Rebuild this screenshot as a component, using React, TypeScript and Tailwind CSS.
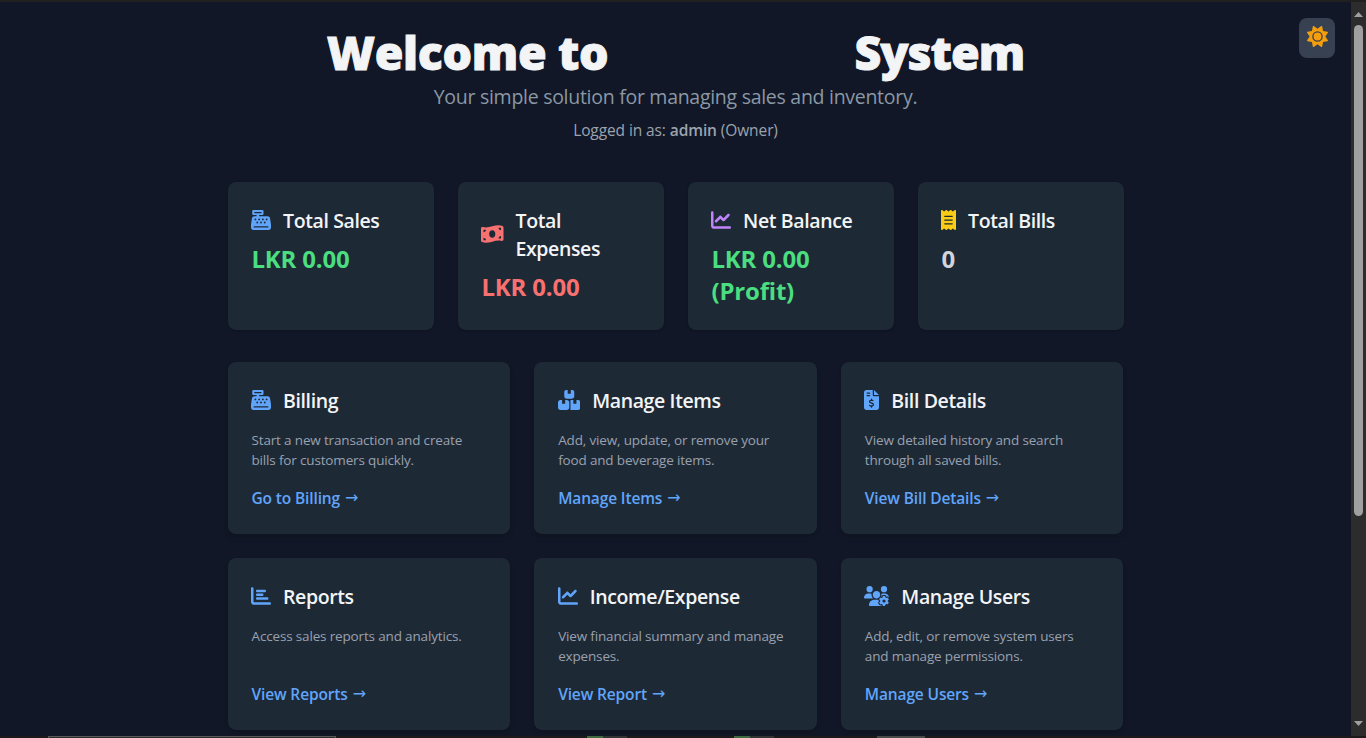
import type { ReactNode } from "react";
import {
  FaBoxesStacked,
  FaCashRegister,
  FaChartBar,
  FaChartLine,
  FaFileInvoiceDollar,
  FaMoneyBillWave,
  FaReceipt,
  FaSun,
  FaUsersGear,
} from "react-icons/fa6";

interface CardTitleProps {
  icon: ReactNode;
  children: ReactNode;
}

function CardTitle({ icon, children }: CardTitleProps) {
  return (
    <div className="flex items-center gap-3">
      <span className="-mt-px -ml-[0.5px] flex shrink-0">{icon}</span>
      <h2 className="pt-px text-[19.5px] leading-7 font-semibold tracking-[-0.38px] text-gray-100">{children}</h2>
    </div>
  );
}

interface StatCardProps {
  icon: ReactNode;
  title: string;
  value: string;
  valueClass: string;
}

function StatCard({ icon, title, value, valueClass }: StatCardProps) {
  return (
    <div className="h-[148px] rounded-lg bg-[#1e2936] p-6 shadow">
      <CardTitle icon={icon}>{title}</CardTitle>
      <p className={`mt-2 text-2xl font-bold tracking-[-0.2px] ${valueClass}`}>{value}</p>
    </div>
  );
}

interface ActionCardProps {
  icon: ReactNode;
  title: string;
  text: string;
  link: string;
}

function ActionCard({ icon, title, text, link }: ActionCardProps) {
  return (
    <div className="flex h-[172px] flex-col rounded-lg bg-[#1e2936] p-6 shadow-md">
      <CardTitle icon={icon}>{title}</CardTitle>
      <p className="mt-[15px] mb-4 grow text-[13.5px] leading-5 tracking-[-0.16px] text-gray-400">{text}</p>
      <a href="#" className="flex h-6 text-[15.5px] leading-6 font-semibold tracking-[-0.14px] text-[#60a5fa]">
        {link}
        <span className="ml-[5px] font-['DejaVu_Sans'] text-base leading-6 font-normal">→</span>
      </a>
    </div>
  );
}

function Scrollbar() {
  return (
    <div className="flex w-[15px] shrink-0 flex-col items-center bg-[#2c2c2c] pt-[10px] pb-[10px]">
      <svg width="9" height="5" viewBox="0 0 9 5" fill="#9f9f9f">
        <path d="M4.5 0 9 5H0Z" />
      </svg>
      <div className="mt-2 h-[491px] w-[9px] rounded-full bg-[#9f9f9f]" />
      <div className="grow" />
      <svg width="9" height="5" viewBox="0 0 9 5" fill="#9f9f9f">
        <path d="M4.5 5 9 0H0Z" />
      </svg>
    </div>
  );
}

export default function App() {
  return (
    <div className="flex h-[738px] w-[1366px] flex-col overflow-hidden bg-[#1f1f1f] font-['Open_Sans','Noto_Sans',sans-serif]">
      <div className="h-[2px] shrink-0 bg-[#202020]" />
      <div className="flex h-[734px] shrink-0">
        <main className="relative flex grow flex-col items-center overflow-hidden bg-[#111726]">
          <button
            aria-label="Toggle theme"
            className="absolute top-4 right-4 flex h-10 w-9 items-center justify-center rounded-lg bg-[#374151] pb-1 text-[#f59e0b]"
          >
            <FaSun className="size-[21px]" />
          </button>
          <div className="flex w-[896px] shrink-0 flex-col pt-[26px]">
            <header className="mb-10 flex flex-col items-center">
              <h1 className="flex items-baseline justify-center gap-[246px] text-[46.5px] leading-[48px] font-extrabold text-[#f3f4f6] [-webkit-text-stroke:0.9px_#f3f4f6]">
                <span className="tracking-[-0.35px]">Welcome to</span>
                <span className="tracking-[-1px]">System</span>
              </h1>
              <p className="mt-[7px] text-[19.5px] leading-7 tracking-[-0.28px] text-[#8b98a5]">
                Your simple solution for managing sales and inventory.
              </p>
              <p className="mt-[7px] text-[15.5px] leading-6 tracking-[-0.1px] text-[#9ca3af]">
                Logged in as: <span className="font-semibold">admin</span> (Owner)
              </p>
            </header>

            <section className="mb-8 grid grid-cols-4 gap-6">
              <StatCard
                icon={<FaCashRegister className="h-5 w-5 text-[#60a5fa]" />}
                title="Total Sales"
                value="LKR 0.00"
                valueClass="text-[#4ade80]"
              />
              <StatCard
                icon={<FaMoneyBillWave className="h-5 w-[22.5px] text-[#f87171]" />}
                title="Total Expenses"
                value="LKR 0.00"
                valueClass="text-[#f87171]"
              />
              <StatCard
                icon={<FaChartLine className="h-5 w-5 text-[#c084fc]" />}
                title="Net Balance"
                value="LKR 0.00 (Profit)"
                valueClass="text-[#4ade80]"
              />
              <StatCard
                icon={<FaReceipt className="h-5 w-[15px] text-[#facc15]" />}
                title="Total Bills"
                value="0"
                valueClass="text-[#d1d5db]"
              />
            </section>

            <section className="grid grid-cols-3 gap-6">
              <ActionCard
                icon={<FaCashRegister className="h-5 w-5 text-[#60a5fa]" />}
                title="Billing"
                text="Start a new transaction and create bills for customers quickly."
                link="Go to Billing"
              />
              <ActionCard
                icon={<FaBoxesStacked className="h-5 w-[22.5px] text-[#60a5fa]" />}
                title="Manage Items"
                text="Add, view, update, or remove your food and beverage items."
                link="Manage Items"
              />
              <ActionCard
                icon={<FaFileInvoiceDollar className="h-5 w-[15px] text-[#60a5fa]" />}
                title="Bill Details"
                text="View detailed history and search through all saved bills."
                link="View Bill Details"
              />
              <ActionCard
                icon={<FaChartBar className="h-5 w-5 text-[#60a5fa]" />}
                title="Reports"
                text="Access sales reports and analytics."
                link="View Reports"
              />
              <ActionCard
                icon={<FaChartLine className="h-5 w-5 text-[#60a5fa]" />}
                title="Income/Expense"
                text="View financial summary and manage expenses."
                link="View Report"
              />
              <ActionCard
                icon={<FaUsersGear className="h-5 w-[25px] text-[#60a5fa]" />}
                title="Manage Users"
                text="Add, edit, or remove system users and manage permissions."
                link="Manage Users"
              />
            </section>
          </div>
        </main>
        <Scrollbar />
      </div>
      <div className="flex h-[2px] shrink-0 bg-[#1e1a1b]">
        <div className="ml-12 h-[2px] w-[288px] border border-b-0 border-[#5a5a5a] bg-[#2b2b2b]" />
        <div className="ml-[251px] w-4 bg-[#3f6b3f]" />
        <div className="w-6 bg-[#333333]" />
        <div className="ml-[107px] w-4 bg-[#3f6b3f]" />
        <div className="w-6 bg-[#333333]" />
        <div className="ml-[103px] w-12 bg-[#4a4a4a]" />
      </div>
    </div>
  );
}
